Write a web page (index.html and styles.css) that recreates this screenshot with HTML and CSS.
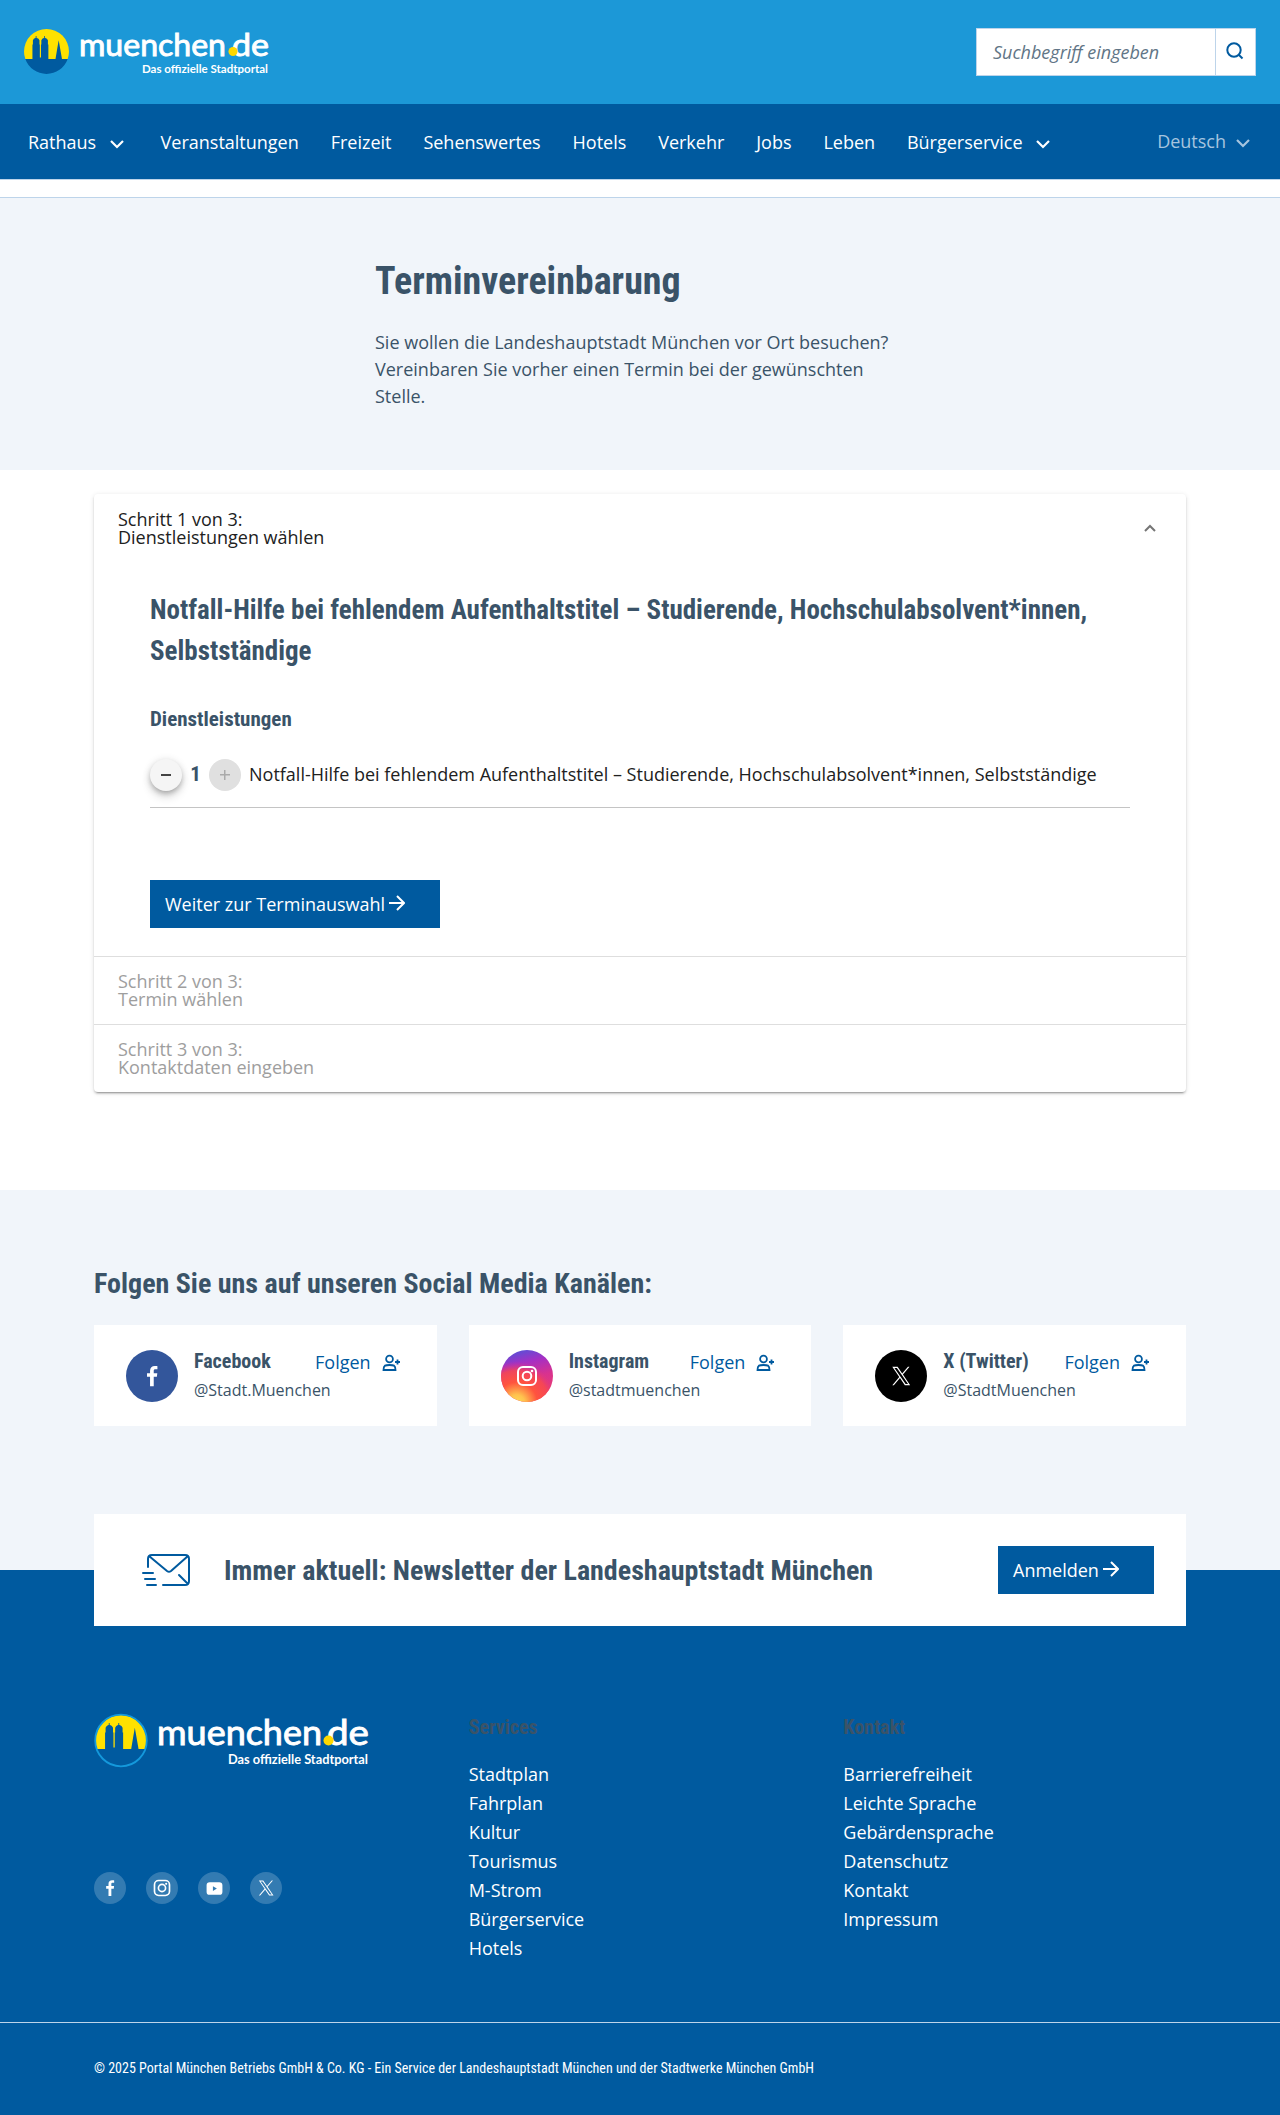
FILE: index.html
```html
<!DOCTYPE html>
<html lang="de">
<head>
<meta charset="utf-8">
<title>Terminvereinbarung – muenchen.de</title>
<link rel="stylesheet" href="styles.css">
</head>
<body>
<svg class="defs" width="0" height="0" aria-hidden="true">
  <defs>
    <linearGradient id="insta-base" x1="0.35" y1="0" x2="0.6" y2="1">
      <stop offset="0" stop-color="#5b4fd6"/><stop offset=".25" stop-color="#a52fc4"/><stop offset=".55" stop-color="#d8328f"/><stop offset="1" stop-color="#ee3f6b"/>
    </linearGradient>
    <radialGradient id="insta-glow" cx=".3" cy="1.02" r=".8">
      <stop offset="0" stop-color="#ffdc55"/><stop offset=".2" stop-color="#ffc24e"/><stop offset=".5" stop-color="#ff543e"/><stop offset=".78" stop-color="#f8484f" stop-opacity=".85"/><stop offset="1" stop-color="#d8328f" stop-opacity="0"/>
    </radialGradient>
    <symbol id="chevron" viewBox="0 0 24 24"><path d="M6 9l6 6 6-6" fill="none" stroke="currentColor" stroke-width="2.2"/></symbol>
    <symbol id="arrow" viewBox="0 0 16 16"><path d="M0 8h15M8 1l7 7-7 7" fill="none" stroke="currentColor" stroke-width="2"/></symbol>
    <symbol id="facebook" viewBox="0 0 24 24"><path d="M13.6 21.500v-8.700h2.900l.4-3.300h-3.300V7.400c0-1 .3-1.600 1.700-1.600H17V2.900c-.3 0-1.300-.1-2.500-.1-2.500 0-4.300 1.500-4.300 4.300v2.400H7.400v3.300h2.800v8.700z" fill="currentColor"/></symbol>
    <symbol id="instagram" viewBox="0 0 24 24"><g fill="none" stroke="currentColor" stroke-width="2"><rect x="3" y="3" width="18" height="18" rx="5"/><circle cx="12" cy="12" r="4.300"/></g><circle cx="17" cy="7" r="1.300" fill="currentColor"/></symbol>
    <symbol id="youtube" viewBox="0 0 24 24"><path fill-rule="evenodd" fill="currentColor" d="M6 4h12q4 0 4 4v8q0 4-4 4H6q-4 0-4-4V8q0-4 4-4zM10 9v6l5-3z"/></symbol>
    <symbol id="x" viewBox="0 0 24 24"><path fill="currentColor" d="M14.100 10.400 21.300 2h-1.700l-6.300 7.300L8.300 2H2.500l7.600 11L2.500 22h1.700l6.700-7.800 5.300 7.800H22zm-2.400 2.700-.8-1.100L4.800 3.300h2.700l5 7.100.8 1.100 6.400 9.200h-2.700z"/></symbol>
    <symbol id="follow" viewBox="0 0 20 18"><g fill="none" stroke="currentColor" stroke-width="1.800"><circle cx="7.500" cy="5" r="3.400"/><path d="M1.500 16c0-5 2-5 6-5s6 0 6 5zM15.500 5.500v5M13 8h5"/></g></symbol>
    <symbol id="skyline" viewBox="0 0 48 48">
      <path d="M1.400 32A24 24 0 0 1 0 24a24 24 0 0 1 48 0 24 24 0 0 1-1.400 8z" fill="#ffe100"/>
      <path d="M1.400 32H9V16.500h.5V12q.5-2 3-2.800V7.500h.8v1.700q2.700.8 3.200 2.800v4.500h.4v14h1.200v-14h.4V12q.5-2 3-2.800V7.500h.8v1.700q2.700.8 3.200 2.800v4.500h.5V32h7.600l1.900-11.500 1.500-8.500 1.500 8.500L40.500 32h6.100A24 24 0 0 1 1.400 32z" fill="#005a9f"/>
    </symbol>
  </defs>
</svg>

<header>
  <div class="topbar">
    <svg class="logo" width="246" height="48" role="img" aria-label="muenchen.de">
      <use href="#skyline" x="0" y="1" width="45" height="45"/>
      <text class="mark" x="55" y="27.500" font-size="31" textLength="147" lengthAdjust="spacingAndGlyphs">muenchen</text>
      <text class="mark" x="208" y="27.500" font-size="31" textLength="37" lengthAdjust="spacingAndGlyphs">de</text>
      <circle cx="209" cy="23.500" r="4.500" fill="#ffd800"/>
      <text class="tag" x="118" y="45" font-size="11.500" textLength="126" lengthAdjust="spacingAndGlyphs">Das offizielle Stadtportal</text>
    </svg>
    <form class="search">
      <span class="search-text">Suchbegriff eingeben</span>
      <span class="search-btn"><svg width="18" height="18" viewBox="0 0 18 18"><g fill="none" stroke="#005a9f" stroke-width="2"><circle cx="8" cy="8" r="6.700"/><path d="M12.500 12.500l4 4"/></g></svg></span>
    </form>
  </div>
  <nav class="nav">
    <a>Rathaus<svg width="24" height="24"><use href="#chevron"/></svg></a>
    <a>Veranstaltungen</a><a>Freizeit</a><a>Sehenswertes</a><a>Hotels</a><a>Verkehr</a><a>Jobs</a><a>Leben</a>
    <a>Bürgerservice<svg width="24" height="24"><use href="#chevron"/></svg></a>
    <a class="lang">Deutsch<svg width="24" height="24"><use href="#chevron"/></svg></a>
  </nav>
</header>

<section class="hero">
  <div class="hero-inner">
    <h1>Terminvereinbarung</h1>
    <p>Sie wollen die Landeshauptstadt München vor Ort besuchen? Vereinbaren Sie vorher einen Termin bei der gewünschten Stelle.</p>
  </div>
</section>

<main class="panels">
  <section>
    <div class="step"><span>Schritt 1 von 3:<br>Dienstleistungen wählen</span><svg class="up" width="12" height="8" viewBox="0 0 12 8"><path d="M1 7l5-5 5 5" fill="none" stroke="currentColor" stroke-width="2"/></svg></div>
    <div class="body">
      <h2>Notfall-Hilfe bei fehlendem Aufenthaltstitel – Studierende, Hochschulabsolvent*innen, Selbstständige</h2>
      <h3>Dienstleistungen</h3>
      <div class="service">
        <button class="round minus"><i></i></button><b>1</b><button class="round plus"><i></i></button>
        <span>Notfall-Hilfe bei fehlendem Aufenthaltstitel – Studierende, Hochschulabsolvent*innen, Selbstständige</span>
      </div>
      <a class="btn next">Weiter zur Terminauswahl<svg width="16" height="16"><use href="#arrow"/></svg></a>
    </div>
  </section>
  <section class="step off"><span>Schritt 2 von 3:<br>Termin wählen</span></section>
  <section class="step off"><span>Schritt 3 von 3:<br>Kontaktdaten eingeben</span></section>
</main>

<section class="social">
  <h2>Folgen Sie uns auf unseren Social Media Kanälen:</h2>
  <div class="cards">
    <article class="card">
      <span class="badge fb"><svg width="26" height="26"><use href="#facebook"/></svg></span>
      <div class="who"><h3>Facebook</h3><p>@Stadt.Muenchen</p></div>
      <a class="follow">Folgen<svg width="20" height="18"><use href="#follow"/></svg></a>
    </article>
    <article class="card">
      <span class="badge"><svg width="52" height="52"><circle cx="26" cy="26" r="26" fill="url(#insta-base)"/><circle cx="26" cy="26" r="26" fill="url(#insta-glow)"/><use href="#instagram" x="14" y="14" width="24" height="24" color="#fff"/></svg></span>
      <div class="who"><h3>Instagram</h3><p>@stadtmuenchen</p></div>
      <a class="follow">Folgen<svg width="20" height="18"><use href="#follow"/></svg></a>
    </article>
    <article class="card">
      <span class="badge tw"><svg width="22" height="22"><use href="#x"/></svg></span>
      <div class="who"><h3>X (Twitter)</h3><p>@StadtMuenchen</p></div>
      <a class="follow">Folgen<svg width="20" height="18"><use href="#follow"/></svg></a>
    </article>
  </div>
</section>

<footer>
  <div class="newsletter">
    <svg class="mail" width="48" height="34" viewBox="0 0 48 34"><g fill="none" stroke="#005a9f" stroke-width="2" stroke-linecap="round" stroke-linejoin="round"><path d="M6 14V6q0-4 4-4h33q4 0 4 4v22q0 4-4 4H21M7 3l18 15q2 1.500 4 0L46 3M37 22l9 9M1 20h10M3 26h10M5 32h9"/></g></svg>
    <h2>Immer aktuell: Newsletter der Landeshauptstadt München</h2>
    <a class="btn join">Anmelden<svg width="16" height="16"><use href="#arrow"/></svg></a>
  </div>
  <div class="cols">
    <div>
      <svg class="flogo" width="276" height="56" role="img" aria-label="muenchen.de">
        <use href="#skyline" x="1.500" y="2" width="51" height="51"/>
        <circle cx="27" cy="27.500" r="25.800" fill="none" stroke="#1499dc" stroke-width="1.800"/>
        <text class="mark" x="63" y="32" font-size="35" textLength="165" lengthAdjust="spacingAndGlyphs">muenchen</text>
        <text class="mark" x="233" y="32" font-size="35" textLength="42" lengthAdjust="spacingAndGlyphs">de</text>
        <circle cx="234.500" cy="27.500" r="5" fill="#ffd800"/>
        <text class="tag" x="134" y="51" font-size="12.500" textLength="140" lengthAdjust="spacingAndGlyphs">Das offizielle Stadtportal</text>
      </svg>
      <div class="icons">
        <span><svg width="20" height="20"><use href="#facebook"/></svg></span>
        <span><svg width="20" height="20"><use href="#instagram"/></svg></span>
        <span><svg width="19" height="19"><use href="#youtube"/></svg></span>
        <span><svg width="18" height="18"><use href="#x"/></svg></span>
      </div>
    </div>
    <div>
      <h3>Services</h3>
      <ul><li>Stadtplan</li><li>Fahrplan</li><li>Kultur</li><li>Tourismus</li><li>M-Strom</li><li>Bürgerservice</li><li>Hotels</li></ul>
    </div>
    <div>
      <h3>Kontakt</h3>
      <ul><li>Barrierefreiheit</li><li>Leichte Sprache</li><li>Gebärdensprache</li><li>Datenschutz</li><li>Kontakt</li><li>Impressum</li></ul>
    </div>
  </div>
  <div class="legal"><p>© 2025 Portal München Betriebs GmbH &amp; Co. KG - Ein Service der Landeshauptstadt München und der Stadtwerke München GmbH</p></div>
</footer>
</body>
</html>
```
FILE: styles.css
```css
* { box-sizing: border-box; }
body { margin: 0; font: 18px/27px "Open Sans", sans-serif; color: #3a5368; background: #fff; }
h1, h2, h3, p, ul { margin: 0; padding: 0; }
h1, h2, h3, .legal { font-family: "Roboto Condensed", Roboto, sans-serif; font-stretch: 75%; font-weight: 700; }
svg { display: block; flex: none; }
.defs { position: absolute; }
.topbar { height: 104px; background: #1c98d7; padding: 0 24px; display: flex; align-items: center; justify-content: space-between; }
.logo, .flogo { overflow: visible; }
.mark { font-family: Lato, sans-serif; font-weight: 400; fill: #fff; stroke: #fff; stroke-width: .9px; }
.tag { font-family: Lato, sans-serif; font-weight: 700; fill: #fff; }
.search { width: 280px; height: 48px; display: flex; background: #fff; border: 1px solid #bdd4ea; }
.search-text { flex: 1; padding: 10px 16px; font-style: italic; line-height: 26px; color: #617586; white-space: nowrap; }
.search-btn { width: 40px; border-left: 1px solid #bdd4ea; display: flex; align-items: center; justify-content: center; padding: 0 2px 2px 0; }
.nav { height: 76px; background: #005a9f; border-bottom: 1px solid #bdd4ea; padding: 1px 25px 0 28px; display: flex; align-items: center; gap: 31.9px; color: #fff; }
.nav a { display: flex; align-items: center; gap: 8.500px; white-space: nowrap; }
.nav svg { margin-top: 3px; }
.nav .lang { margin-left: auto; color: #a6c5df; gap: 5px; padding-bottom: 2px; }
.hero { margin-top: 17px; height: 273px; border-top: 1px solid #bdd4ea; background: #f1f5fa; }
.hero-inner { width: 530px; margin-left: 375px; padding-top: 56px; }
h1 { font-size: 38px; line-height: 54px; }
.hero p { margin-top: 21px; }
.panels { width: 1092px; margin: 24px auto 0; border-radius: 4px; background: #fff; box-shadow: 0 3px 1px -2px rgba(0,0,0,.2), 0 2px 2px 0 rgba(0,0,0,.14), 0 1px 5px 0 rgba(0,0,0,.12); }
.step { height: 68px; padding: 0 30px 0 24px; display: flex; align-items: center; justify-content: space-between; line-height: 18px; color: #212121; }
.step.off { border-top: 1px solid #dedede; color: #9e9e9e; padding-bottom: 2px; }
.up { color: #757575; }
.body { height: 394px; padding: 28px 56px 0; }
.body h2 { font-size: 27px; line-height: 41px; }
.body h3 { font-size: 21px; line-height: 30px; margin-top: 32px; }
.service { display: flex; align-items: center; height: 66px; margin-top: 8px; border-bottom: 1px solid #c4c4c4; color: #212121; }
.service b { width: 27px; text-align: center; color: #3a5368; font: 700 21px/27px "Roboto Condensed", Roboto, sans-serif; }
.service span { margin-left: 8px; white-space: nowrap; }
.round { width: 32px; height: 32px; padding: 0; border: 0; border-radius: 50%; display: grid; place-items: center; }
.minus { background: #f5f5f5; color: #444; box-shadow: 0 3px 5px -1px rgba(0,0,0,.2), 0 6px 10px rgba(0,0,0,.14), 0 1px 8px rgba(0,0,0,.12); }
.plus { background: #e0e0e0; color: #aaa; }
.round i { width: 10px; height: 2px; background: currentColor; }
.plus i { height: 10px; background: linear-gradient(currentColor,currentColor) center/10px 1.500px no-repeat, linear-gradient(currentColor,currentColor) center/1.500px 10px no-repeat; }
.btn { display: flex; align-items: center; gap: 4px; height: 48px; padding: 0 15px; background: #005a9f; color: #fff; white-space: nowrap; }
.btn svg { margin-bottom: 3px; }
.next { width: 290px; margin-top: 72px; }
.social { margin-top: 98px; height: 380px; background: #f1f5fa; padding: 74px 94px 0; }
.social h2, .newsletter h2 { font-size: 28px; line-height: 40px; white-space: nowrap; }
.cards { display: grid; grid-template-columns: repeat(3, 1fr); gap: 32px; margin-top: 21px; }
.card { height: 101px; background: #fff; padding: 25px 36px 0 32px; display: flex; }
.badge { width: 52px; height: 52px; border-radius: 50%; display: grid; place-items: center; color: #fff; flex: none; }
.fb { background: #33569b; }
.tw { background: #000; }
.who { margin: -1px 0 0 16px; flex: 1; white-space: nowrap; }
.who h3 { font-size: 20px; line-height: 24px; }
.who p { font-size: 16px; line-height: 24px; margin-top: 5px; width: 0; }
.follow { display: flex; color: #005a9f; gap: 11px; margin: -1px -1px 0 0; }
.follow svg { margin-top: 5px; }
footer { background: #005a9f; height: 545px; }
.newsletter { position: relative; top: -56px; width: 1092px; height: 112px; margin: 0 auto; background: #fff; padding: 0 32px 0 48px; display: flex; align-items: center; }
.newsletter h2 { margin: 2px 0 0 34px; }
.join { width: 156px; margin-left: auto; }
.cols { width: 1092px; margin: 31px auto 0; height: 309px; display: grid; grid-template-columns: repeat(3, 1fr); gap: 32px; color: #fff; }
.icons { display: flex; gap: 20px; margin-top: 103px; }
.icons span { width: 32px; height: 32px; border-radius: 50%; background: #337bb2; display: grid; place-items: center; }
.cols h3 { color: #3a5368; font-size: 20px; line-height: 28px; }
.cols ul { list-style: none; line-height: 29px; margin-top: 19px; }
.legal { border-top: 1px solid #bdd4ea; padding: 32px 94px 0; font-size: 14px; font-weight: 400; color: #fff; }
```
